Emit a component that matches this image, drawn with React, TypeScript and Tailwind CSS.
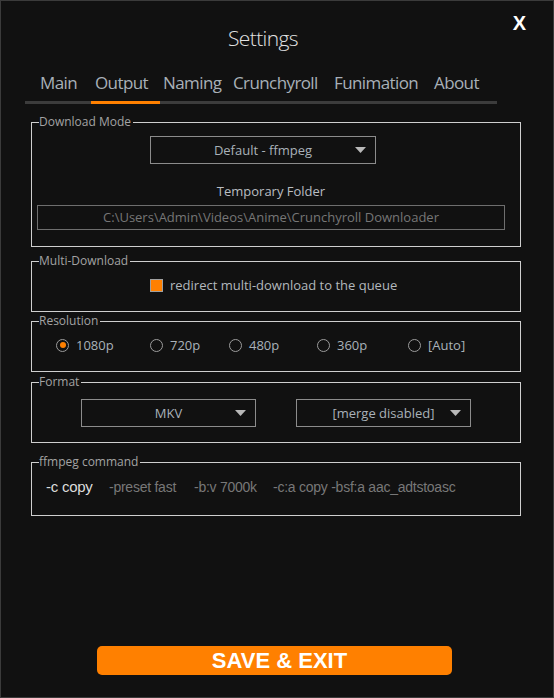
import React from 'react';

const sans = "font-['Open_Sans',sans-serif]";
const arial = "font-['Liberation_Sans',Arial,sans-serif]";

const tabs = [
  { label: 'Main', cls: 'w-[66px] pl-[15px]' },
  { label: 'Output', cls: 'w-[69px] pl-[4px]', active: true },
  { label: 'Naming', cls: 'w-[68px] pl-[3px]' },
  { label: 'Crunchyroll', cls: 'w-[99px] pl-[5px]' },
  { label: 'Funimation', cls: 'w-[100px] pl-[7px]' },
  { label: 'About', cls: 'w-[70px] pl-[7px]' },
];

const resolutions = [
  { label: '1080p', cls: 'w-[94px]', checked: true },
  { label: '720p', cls: 'w-[79px]' },
  { label: '480p', cls: 'w-[88px]' },
  { label: '360p', cls: 'w-[91px]' },
  { label: '[Auto]', cls: '' },
];

function Select({ value, className = '' }: { value: string; className?: string }) {
  return (
    <div
      className={`relative flex h-[28px] items-center justify-center border border-[#8c8c8c] text-[13px] leading-[18px] text-[#a9b1b9] ${className}`}
    >
      <span>{value}</span>
      {/* flèche du menu déroulant */}
      <svg width="11" height="6" viewBox="0 0 11 6" className="absolute right-[9px] top-[10px]">
        <path d="M0 0h11L5.5 6z" fill="#b9b9b9" />
      </svg>
    </div>
  );
}

function Group({
  title,
  className = '',
  children,
}: {
  title: string;
  className?: string;
  children: React.ReactNode;
}) {
  return (
    <fieldset className={`ml-[30px] w-[490px] border border-[#cfcfcf] ${className}`}>
      <legend className="ml-[7px] pr-[2px] text-[12px] leading-[16px] text-[#a3a3a3]">{title}</legend>
      {children}
    </fieldset>
  );
}

export default function App() {
  return (
    <div
      className={`relative flex h-[698px] w-[554px] flex-col border border-[#3b3b3b] bg-[#111111] ${sans}`}
    >
      <button
        className={`absolute right-[27px] top-[10px] text-[20px] font-bold leading-[24px] text-white ${arial}`}
      >
        X
      </button>

      <div className="ml-[24px] w-[472px]">
        <h1 className="mt-[21px] pl-[4px] text-center text-[21px] font-light leading-[32px] tracking-[-0.6px] text-[#e2e2e2]">
          Settings
        </h1>

        <div className="mt-[17px] flex border-b-[3px] border-[#3c3c3c]">
          {tabs.map((t) => (
            <div
              key={t.label}
              className={`${t.cls} pb-[6px] text-[17px] leading-[24px] tracking-[-0.6px] text-[#a8b0b8] ${
                t.active ? '-mb-[3px] border-b-[3px] border-[#ff8000]' : ''
              }`}
            >
              {t.label}
            </div>
          ))}
        </div>
      </div>

      <Group title="Download Mode" className="mt-[10px] h-[133px]">
        <Select value="Default - ffmpeg" className="ml-[118px] mt-[6px] w-[226px]" />
        <div className="ml-[5px] w-[468px]">
          <div className="mt-[18px] text-center text-[13px] leading-[18px] text-[#b9bdc1]">Temporary Folder</div>
          <div className="mt-[5px] flex h-[25px] items-center justify-center border border-[#6e6e6e] text-[13px] text-[#767676]">
            C:\Users\Admin\Videos\Anime\Crunchyroll Downloader
          </div>
        </div>
      </Group>

      <Group title="Multi-Download" className="mt-[6px] h-[59px]">
        <div className="mt-[7px] flex h-[18px] items-center pl-[118px]">
          <div className="h-[13px] w-[13px] border border-[#a0a0a0] bg-[#ff8000]" />
          <span className="ml-[7px] text-[13px] leading-[18px] text-[#b3b8bd]">
            redirect multi-download to the queue
          </span>
        </div>
      </Group>

      <Group title="Resolution" className="mt-[1px] h-[59px]">
        <div className="mt-[7px] flex h-[18px] items-center pl-[24px]">
          {resolutions.map((r) => (
            <div key={r.label} className={`flex items-center ${r.cls}`}>
              <div className="flex h-[13px] w-[13px] items-center justify-center rounded-full border border-[#9b9b9b]">
                {r.checked && <div className="h-[6px] w-[6px] rounded-full bg-[#ff8000]" />}
              </div>
              <span className="ml-[7px] text-[13px] leading-[18px] text-[#a9b1b9]">{r.label}</span>
            </div>
          ))}
        </div>
      </Group>

      <Group title="Format" className="mt-[2px] h-[69px]">
        <div className="mt-[9px] flex gap-[40px] pl-[49px]">
          <Select value="MKV" className="w-[175px]" />
          <Select value="[merge disabled]" className="w-[175px]" />
        </div>
      </Group>

      <Group title="ffmpeg command" className="mt-[11px] h-[62px]">
        <div className={`mt-[8px] flex h-[18px] items-baseline pl-[14px] leading-[18px] tracking-[-0.25px] ${arial}`}>
          <span className="w-[63px] text-[15px] text-[#dcdcdc]">-c copy</span>
          <span className="w-[85px] text-[14px] text-[#787878]">-preset fast</span>
          <span className="w-[79px] text-[14px] text-[#787878]">-b:v 7000k</span>
          <span className="text-[14px] text-[#787878]">-c:a copy -bsf:a aac_adtstoasc</span>
        </div>
      </Group>

      <div className="flex-1" />

      <button
        className={`mb-[22px] ml-[96px] h-[29px] w-[355px] rounded-[5px] bg-[#ff8000] pl-[10px] pt-[1px] text-[22px] font-bold leading-[26px] text-white ${arial}`}
      >
        SAVE &amp; EXIT
      </button>
    </div>
  );
}
